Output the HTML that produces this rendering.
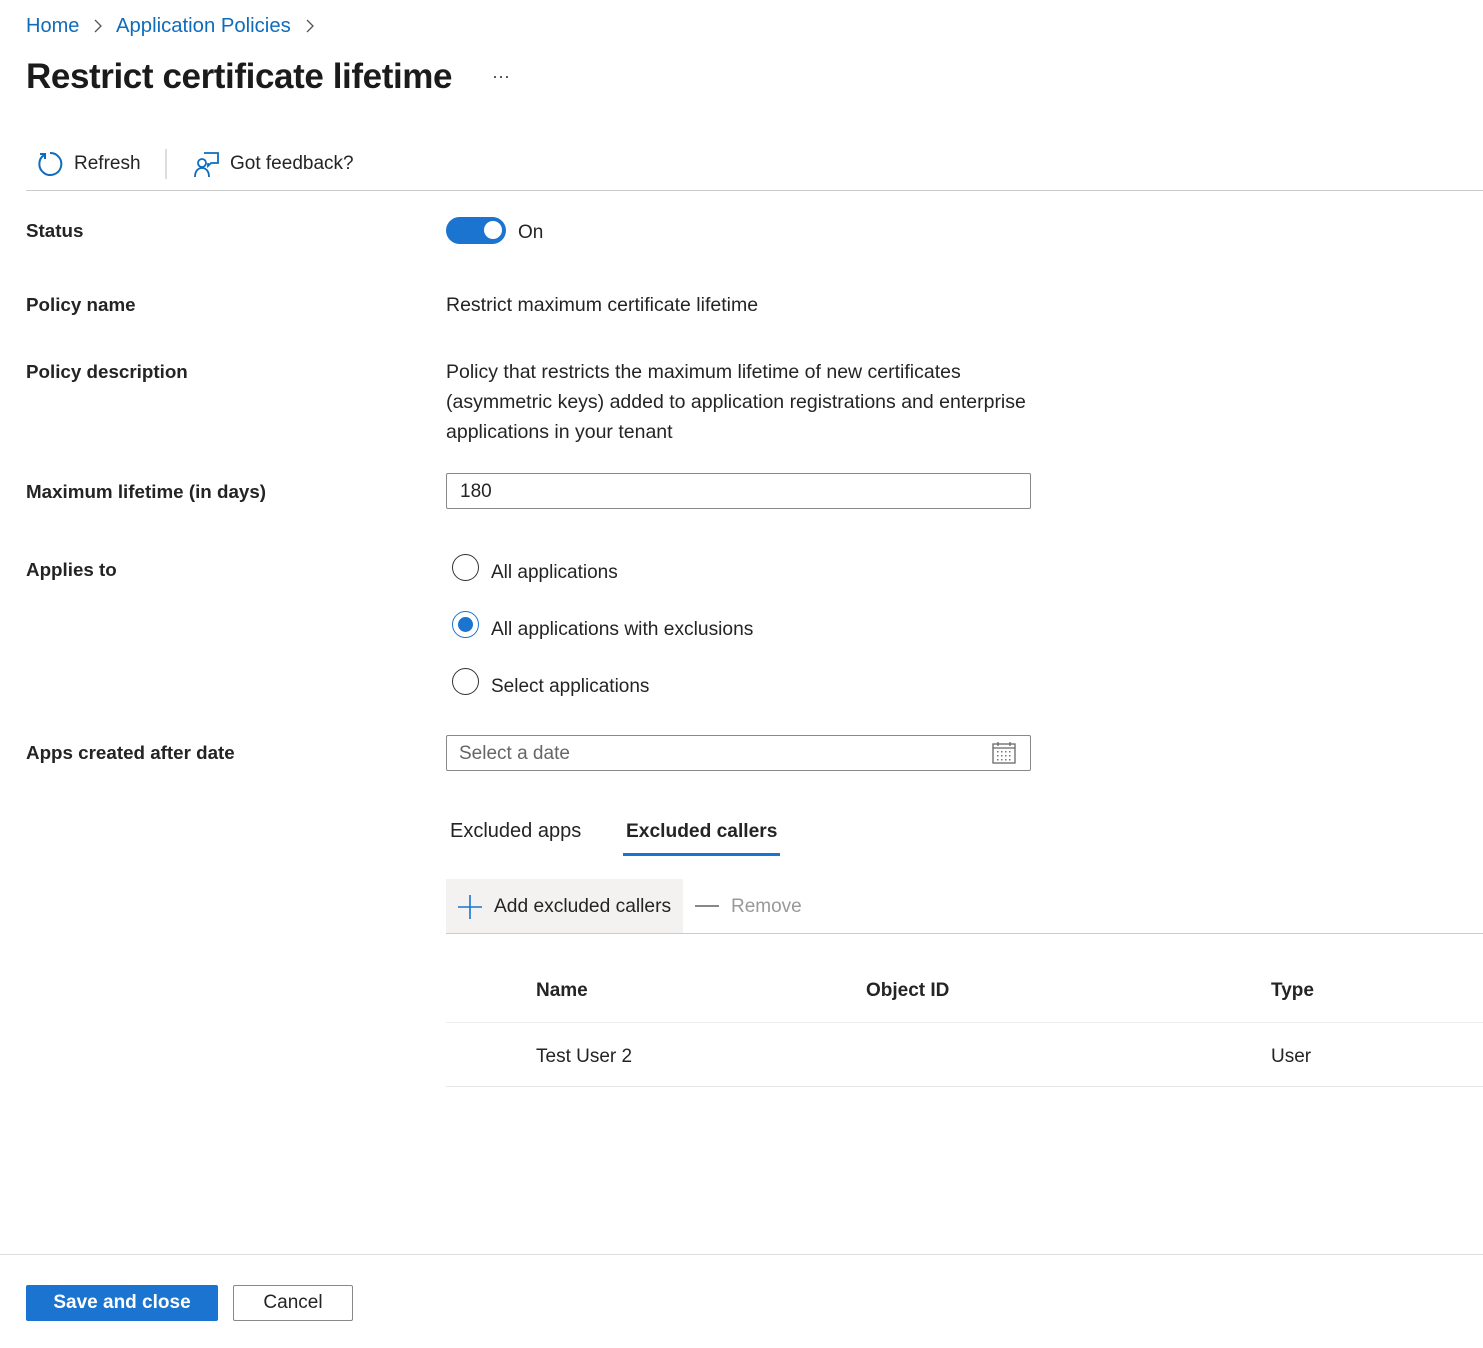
<!DOCTYPE html>
<html><head><meta charset="utf-8"><style>
*{margin:0;padding:0;box-sizing:border-box}
body{width:1483px;height:1348px;background:#fff;font-family:"Liberation Sans",sans-serif;color:#242424;position:relative;overflow:hidden;font-size:18px}
.a{position:absolute;white-space:nowrap;line-height:24px}
.lbl{font-weight:bold;font-size:18.8px;color:#242424}
.blue{color:#0f6cbd}
</style></head><body>
<div class="a blue" style="left:26px;top:14px;font-size:20px">Home</div>
<svg class="a" style="left:92px;top:19px" width="12" height="14"><path d="M3 1l6 6-6 6" stroke="#555" fill="none" stroke-width="1.3"/></svg>
<div class="a blue" style="left:116px;top:14px;font-size:20.3px">Application Policies</div>
<svg class="a" style="left:304px;top:19px" width="12" height="14"><path d="M3 1l6 6-6 6" stroke="#555" fill="none" stroke-width="1.3"/></svg>
<div class="a" style="left:26px;top:56px;font-size:35px;line-height:42px;font-weight:bold;color:#1b1b1b;letter-spacing:-0.4px">Restrict certificate lifetime</div>
<div class="a" style="left:492px;top:64px;font-size:18px;color:#444">···</div>

<svg class="a" style="left:36px;top:150px" width="28" height="28" viewBox="0 0 28 28"><path d="M8 5A11 11 0 1 0 14 3" stroke="#0f6cbd" fill="none" stroke-width="2"/><path d="M4 4h5v5" stroke="#0f6cbd" fill="none" stroke-width="2"/></svg>
<div class="a" style="left:74px;top:152px;font-size:19px">Refresh</div>
<div class="a" style="left:165px;top:149px;width:2px;height:30px;background:#ddd"></div>
<svg class="a" style="left:192px;top:150px" width="28" height="28" viewBox="0 0 28 28"><circle cx="10" cy="13" r="4" stroke="#0f6cbd" fill="none" stroke-width="1.8"/><path d="M3 27c0-6 3-9 7-9s7 3 7 9" stroke="#0f6cbd" fill="none" stroke-width="1.8"/><path d="M12 3h14v10h-7l-3 3v-3" stroke="#0f6cbd" fill="none" stroke-width="1.8"/></svg>
<div class="a" style="left:230px;top:152px;font-size:19px">Got feedback?</div>
<div class="a" style="left:26px;top:190px;width:1457px;height:1px;background:#ccc"></div>

<div class="a lbl" style="left:26px;top:219px">Status</div>
<div class="a" style="left:446px;top:217px;width:60px;height:27px;border-radius:14px;background:#1a74d0"></div>
<div class="a" style="left:484px;top:221px;width:18px;height:18px;border-radius:50%;background:#fff"></div>
<div class="a" style="left:518px;top:221px;font-size:19px">On</div>

<div class="a lbl" style="left:26px;top:293px">Policy name</div>
<div class="a" style="left:446px;top:293px;font-size:19.5px">Restrict maximum certificate lifetime</div>
<div class="a lbl" style="left:26px;top:360px">Policy description</div>
<div class="a" style="left:446px;top:357px;line-height:30px;white-space:normal;width:640px;font-size:19.5px">Policy that restricts the maximum lifetime of new certificates<br>(asymmetric keys) added to application registrations and enterprise<br>applications in your tenant</div>

<div class="a lbl" style="left:26px;top:480px">Maximum lifetime (in days)</div>
<div class="a" style="left:446px;top:473px;width:585px;height:36px;border:1px solid #888;border-radius:2px"></div>
<div class="a" style="left:460px;top:480px;font-size:19px">180</div>

<div class="a lbl" style="left:26px;top:558px">Applies to</div>
<div class="a" style="left:452px;top:554px;width:27px;height:27px;border:1.5px solid #333;border-radius:50%"></div>
<div class="a" style="left:491px;top:561px;font-size:19px">All applications</div>
<div class="a" style="left:452px;top:611px;width:27px;height:27px;border:1.5px solid #1a74d0;border-radius:50%"></div>
<div class="a" style="left:458px;top:617px;width:15px;height:15px;background:#1a74d0;border-radius:50%"></div>
<div class="a" style="left:491px;top:618px;font-size:19.2px">All applications with exclusions</div>
<div class="a" style="left:452px;top:668px;width:27px;height:27px;border:1.5px solid #333;border-radius:50%"></div>
<div class="a" style="left:491px;top:675px;font-size:19px">Select applications</div>

<div class="a lbl" style="left:26px;top:741px">Apps created after date</div>
<div class="a" style="left:446px;top:735px;width:585px;height:36px;border:1px solid #888;border-radius:2px"></div>
<div class="a" style="left:459px;top:742px;color:#666;font-size:19px">Select a date</div>
<svg class="a" style="left:991px;top:741px" width="26" height="24" viewBox="0 0 26 24"><rect x="2" y="3" width="22" height="19" fill="none" stroke="#666" stroke-width="1.3"/><path d="M2 7h22M7 1v4M19 1v4" stroke="#666" stroke-width="1.3"/><g fill="#777"><rect x="6" y="10" width="1.5" height="1.5"/><rect x="10" y="10" width="1.5" height="1.5"/><rect x="14" y="10" width="1.5" height="1.5"/><rect x="18" y="10" width="1.5" height="1.5"/><rect x="6" y="14" width="1.5" height="1.5"/><rect x="10" y="14" width="1.5" height="1.5"/><rect x="14" y="14" width="1.5" height="1.5"/><rect x="18" y="14" width="1.5" height="1.5"/><rect x="6" y="18" width="1.5" height="1.5"/><rect x="10" y="18" width="1.5" height="1.5"/><rect x="14" y="18" width="1.5" height="1.5"/><rect x="18" y="18" width="1.5" height="1.5"/></g></svg>

<div class="a" style="left:450px;top:819px;font-size:20px">Excluded apps</div>
<div class="a" style="left:626px;top:820px;font-size:19.2px;font-weight:bold">Excluded callers</div>
<div class="a" style="left:623px;top:853px;width:157px;height:3px;background:#1a74d0"></div>

<div class="a" style="left:446px;top:879px;width:237px;height:54px;background:#f3f2f1"></div>
<svg class="a" style="left:457px;top:894px" width="26" height="26"><path d="M13 1v24M1 13h24" stroke="#1a74d0" stroke-width="1.6"/></svg>
<div class="a" style="left:494px;top:895px;font-size:19.2px">Add excluded callers</div>
<div class="a" style="left:695px;top:905px;width:24px;height:1.5px;background:#888"></div>
<div class="a" style="left:731px;top:895px;font-size:19px;color:#999">Remove</div>
<div class="a" style="left:446px;top:933px;width:1037px;height:1px;background:#ccc"></div>

<div class="a lbl" style="left:536px;top:979px;font-size:19px">Name</div>
<div class="a lbl" style="left:866px;top:979px;font-size:19px">Object ID</div>
<div class="a lbl" style="left:1271px;top:979px;font-size:19px">Type</div>
<div class="a" style="left:446px;top:1022px;width:1037px;height:1px;background:#eee"></div>
<div class="a" style="left:536px;top:1045px;font-size:19px">Test User 2</div>
<div class="a" style="left:1271px;top:1045px;font-size:19px">User</div>
<div class="a" style="left:446px;top:1086px;width:1037px;height:1px;background:#e6e6e6"></div>

<div class="a" style="left:0;top:1254px;width:1483px;height:1px;background:#ddd"></div>
<div class="a" style="left:26px;top:1285px;width:192px;height:36px;background:#1a74d0;border-radius:2px;color:#fff;font-weight:bold;text-align:center;line-height:36px;font-size:19px">Save and close</div>
<div class="a" style="left:233px;top:1285px;width:120px;height:36px;border:1px solid #888;border-radius:2px;text-align:center;line-height:34px;font-size:19px">Cancel</div>
</body></html>
